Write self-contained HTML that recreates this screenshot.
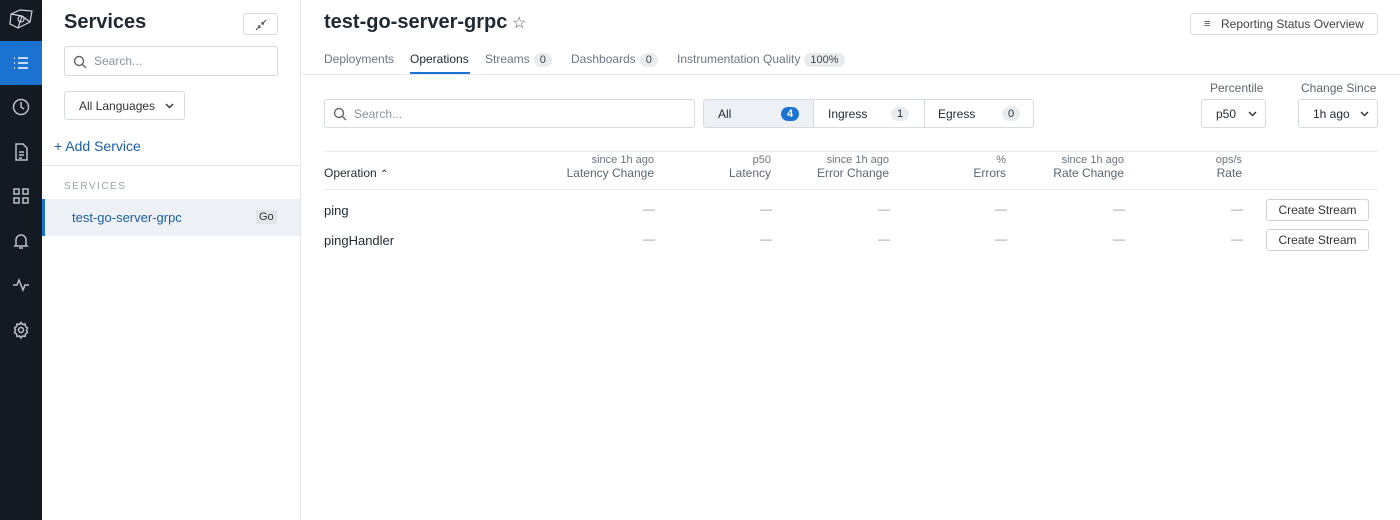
<!DOCTYPE html>
<html><head><meta charset="utf-8"><style>
*{box-sizing:border-box;margin:0;padding:0}
body{width:1400px;height:520px;overflow:hidden;background:#fff;font-family:"Liberation Sans",sans-serif;color:#1f2933;position:relative}
.a{position:absolute}
.nav{left:0;top:0;width:42px;height:520px;background:#141a21}
.navact{left:0;top:41px;width:42px;height:44px;background:#1b72d1}
.ic{position:absolute;left:11px;width:20px;height:20px}
.side{left:42px;top:0;width:259px;height:520px;border-right:1px solid #e3e7eb}
.box{position:absolute;border:1px solid #d6dbe0;border-radius:3px;background:#fff}
.gray{color:#5b6773}
.tab{position:absolute;top:52px;font-size:12px;color:#6b7682}
.pill{display:inline-block;background:#e8ecef;border-radius:8px;padding:1px 6px;font-size:11px;color:#444;margin-left:4px}
.th{position:absolute;text-align:right;font-size:11px;color:#6b7682;line-height:13px}
.th b{display:block;font-weight:normal;font-size:12px;color:#5b6773}
.dash{position:absolute;color:#999;font-size:12px}
.btn{position:absolute;left:1266px;width:103px;height:22px;border:1px solid #ccd2d8;border-radius:3px;font-size:12px;text-align:center;line-height:20px;color:#333}
</style></head><body>
<div class="a nav"></div>
<div class="a navact"></div>
<svg class="ic" style="top:8px;left:8px;width:26px;height:22px" viewBox="0 0 26 22" fill="none" stroke="#cfd5db" stroke-width="1.2"><path d="M3 6 L12 2 L24 3 L22 14 L10 20 L2 16 Z M3 6 L14 8 L22 14 M14 8 L10 20"/><circle cx="13" cy="11" r="3"/></svg>
<svg class="ic" style="top:53px" viewBox="0 0 20 20" stroke="#fff" stroke-width="1.5"><path d="M3 5h1M7 5h10M3 10h1M7 10h10M3 15h1M7 15h10"/></svg>
<svg class="ic" style="top:97px" viewBox="0 0 20 20" fill="none" stroke="#b8c0c8" stroke-width="1.5"><circle cx="10" cy="10" r="7.5"/><path d="M10 5v5l3 2"/></svg>
<svg class="ic" style="top:142px" viewBox="0 0 20 20" fill="none" stroke="#b8c0c8" stroke-width="1.5"><path d="M5 2h7l4 4v12H5z M8 10h5M8 13h5M8 16h3"/></svg>
<svg class="ic" style="top:186px" viewBox="0 0 20 20" fill="none" stroke="#b8c0c8" stroke-width="1.5"><rect x="3" y="3" width="5" height="5"/><rect x="12" y="3" width="5" height="5"/><rect x="3" y="12" width="5" height="5"/><rect x="12" y="12" width="5" height="5"/></svg>
<svg class="ic" style="top:231px" viewBox="0 0 20 20" fill="none" stroke="#b8c0c8" stroke-width="1.5"><path d="M5 14V9a5 5 0 0 1 10 0v5l1 1H4z M8 17h4"/></svg>
<svg class="ic" style="top:275px" viewBox="0 0 20 20" fill="none" stroke="#b8c0c8" stroke-width="1.5"><path d="M2 10h4l2-5 4 10 2-5h4"/></svg>
<svg class="ic" style="top:320px" viewBox="0 0 20 20" fill="none" stroke="#b8c0c8" stroke-width="1.5"><circle cx="10" cy="10" r="2.5"/><path d="M10 2.5l1.5 2 2.5-.5.5 2.5 2 1.5-1 2.5 1 2-2 1.5-.5 2.5-2.5-.5-1.5 2-1.5-2-2.5.5-.5-2.5-2-1.5 1-2.5-1-2 2-1.5.5-2.5 2.5.5z"/></svg>

<div class="a side"></div>
<div class="a" style="left:64px;top:11px;font-size:20px;font-weight:bold;color:#1f2933">Services</div>
<div class="box" style="left:243px;top:13px;width:35px;height:22px"><svg style="position:absolute;left:11px;top:5px" width="12" height="12" viewBox="0 0 12 12" stroke="#555" stroke-width="1.2" fill="none"><path d="M1 11l4-4M3 7h2v2M11 1L7 5M7 3v2h2"/></svg></div>
<div class="box" style="left:64px;top:46px;width:214px;height:30px"><svg style="position:absolute;left:8px;top:8px" width="14" height="14" viewBox="0 0 14 14" fill="none" stroke="#666" stroke-width="1.4"><circle cx="6" cy="6" r="4.5"/><path d="M9.5 9.5L13 13"/></svg><span style="position:absolute;left:29px;top:7px;font-size:12px;color:#8a949e">Search...</span></div>
<div class="box" style="left:64px;top:91px;width:121px;height:29px"><span style="position:absolute;left:14px;top:7px;font-size:12px;color:#333">All Languages</span><svg style="position:absolute;left:100px;top:11px" width="9" height="6" viewBox="0 0 9 6" fill="none" stroke="#333" stroke-width="1.4"><path d="M1 1l3.5 3.5L8 1"/></svg></div>
<div class="a" style="left:54px;top:138px;font-size:14px;color:#1c5fa8">+ Add Service</div>
<div class="a" style="left:42px;top:165px;width:258px;border-top:1px solid #e3e7eb"></div>
<div class="a" style="left:64px;top:181px;font-size:10px;letter-spacing:1.5px;color:#9aa3ac">SERVICES</div>
<div class="a" style="left:42px;top:199px;width:258px;height:37px;background:#edf1f5"></div>
<div class="a" style="left:42px;top:199px;width:3px;height:37px;background:#1b72d1"></div>
<div class="a" style="left:72px;top:210px;font-size:13px;color:#1c5fa8">test-go-server-grpc</div>
<div class="a" style="left:256px;top:210px;font-size:11px;background:#e2e5e8;padding:1px 3px;color:#333">Go</div>

<div class="a" style="left:324px;top:11px;font-size:20px;font-weight:bold;color:#1f2933">test-go-server-grpc</div>
<div class="a" style="left:512px;top:13px;font-size:16px;color:#555">☆</div>
<div class="box" style="left:1190px;top:13px;width:188px;height:22px;font-size:12px;color:#444;line-height:20px;padding-left:30px">Reporting Status Overview<span style="position:absolute;left:13px;top:0;font-size:11px">≡</span></div>

<div class="tab" style="left:324px">Deployments</div>
<div class="tab" style="left:410px;color:#1f2933">Operations</div>
<div class="a" style="left:410px;top:72px;width:60px;height:3px;background:#1b72d1"></div>
<div class="tab" style="left:485px">Streams<span class="pill">0</span></div>
<div class="tab" style="left:571px">Dashboards<span class="pill">0</span></div>
<div class="tab" style="left:677px">Instrumentation Quality<span class="pill">100%</span></div>
<div class="a" style="left:302px;top:74px;width:1098px;border-top:1px solid #e3e7eb"></div>

<div class="box" style="left:324px;top:99px;width:371px;height:29px"><svg style="position:absolute;left:8px;top:7px" width="14" height="14" viewBox="0 0 14 14" fill="none" stroke="#666" stroke-width="1.4"><circle cx="6" cy="6" r="4.5"/><path d="M9.5 9.5L13 13"/></svg><span style="position:absolute;left:29px;top:7px;font-size:12px;color:#8a949e">Search...</span></div>
<div class="box" style="left:703px;top:99px;width:331px;height:29px;overflow:hidden">
<div style="position:absolute;left:0;top:0;width:110px;height:29px;background:#edf1f5;border-right:1px solid #d6dbe0"></div>
<div style="position:absolute;left:220px;top:0;width:1px;height:29px;background:#d6dbe0"></div>
<span style="position:absolute;left:14px;top:7px;font-size:12px">All</span><span style="position:absolute;left:77px;top:7px;width:18px;height:14px;border-radius:7px;background:#1b72d1;color:#fff;font-size:11px;text-align:center;line-height:14px;font-weight:bold">4</span>
<span style="position:absolute;left:124px;top:7px;font-size:12px">Ingress</span><span style="position:absolute;left:187px;top:7px;width:18px;height:14px;border-radius:7px;background:#e8ecef;font-size:11px;text-align:center;line-height:14px">1</span>
<span style="position:absolute;left:234px;top:7px;font-size:12px">Egress</span><span style="position:absolute;left:298px;top:7px;width:18px;height:14px;border-radius:7px;background:#e8ecef;font-size:11px;text-align:center;line-height:14px">0</span>
</div>
<div class="a gray" style="left:1210px;top:81px;font-size:12px">Percentile</div>
<div class="box" style="left:1201px;top:99px;width:65px;height:29px"><span style="position:absolute;left:14px;top:7px;font-size:12px">p50</span><svg style="position:absolute;left:46px;top:11px" width="9" height="6" viewBox="0 0 9 6" fill="none" stroke="#333" stroke-width="1.4"><path d="M1 1l3.5 3.5L8 1"/></svg></div>
<div class="a gray" style="left:1301px;top:81px;font-size:12px">Change Since</div>
<div class="box" style="left:1298px;top:99px;width:80px;height:29px"><span style="position:absolute;left:14px;top:7px;font-size:12px">1h ago</span><svg style="position:absolute;left:61px;top:11px" width="9" height="6" viewBox="0 0 9 6" fill="none" stroke="#333" stroke-width="1.4"><path d="M1 1l3.5 3.5L8 1"/></svg></div>

<div class="a" style="left:324px;top:151px;width:1054px;border-top:1px solid #e8ecef"></div>
<div class="a" style="left:324px;top:189px;width:1054px;border-top:1px solid #e8ecef"></div>
<div class="a" style="left:324px;top:166px;font-size:12px">Operation <span style="font-size:10px">⌃</span></div>
<div class="th" style="right:746px;top:154px">since 1h ago<b>Latency Change</b></div>
<div class="th" style="right:629px;top:154px">p50<b>Latency</b></div>
<div class="th" style="right:511px;top:154px">since 1h ago<b>Error Change</b></div>
<div class="th" style="right:394px;top:154px">%<b>Errors</b></div>
<div class="th" style="right:276px;top:154px">since 1h ago<b>Rate Change</b></div>
<div class="th" style="right:158px;top:154px">ops/s<b>Rate</b></div>

<div class="a" style="left:324px;top:203px;font-size:13px">ping</div>
<div class="a" style="left:324px;top:233px;font-size:13px">pingHandler</div>
<div class="dash" style="left:643px;top:202px">—</div><div class="dash" style="left:760px;top:202px">—</div><div class="dash" style="left:878px;top:202px">—</div><div class="dash" style="left:995px;top:202px">—</div><div class="dash" style="left:1113px;top:202px">—</div><div class="dash" style="left:1231px;top:202px">—</div>
<div class="dash" style="left:643px;top:232px">—</div><div class="dash" style="left:760px;top:232px">—</div><div class="dash" style="left:878px;top:232px">—</div><div class="dash" style="left:995px;top:232px">—</div><div class="dash" style="left:1113px;top:232px">—</div><div class="dash" style="left:1231px;top:232px">—</div>
<div class="btn" style="top:199px">Create Stream</div>
<div class="btn" style="top:229px">Create Stream</div>
</body></html>
